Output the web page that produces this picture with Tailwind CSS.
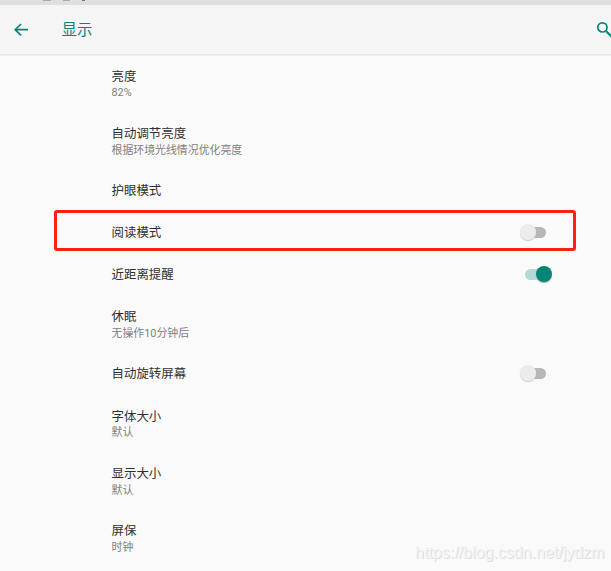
<!DOCTYPE html>
<html lang="zh-CN">
<head>
<meta charset="utf-8">
<title>显示</title>
<script src="https://cdn.jsdelivr.net/npm/@tailwindcss/browser@4"></script>
</head>
<body class="relative flex h-[571px] w-[611px] flex-col overflow-hidden bg-[#fafafa] font-[Roboto,'Noto_Sans_CJK_SC',sans-serif] text-[#303030]">
<div class="h-[5px] shrink-0 overflow-hidden bg-[#dfdfdf]">
  <svg class="block" width="611" height="5"><path d="M43 0h8M63 0h7" stroke="#aaa" stroke-width="2"/><path d="M82 0h3" stroke="#777" stroke-width="2"/></svg>
</div>
<header class="flex h-[50px] shrink-0 items-center border-b border-[#e8e8e8] bg-[#f5f5f5] text-[#068575] shadow-[0_1px_1px_#eeeeee]">
  <svg class="ml-[14px] shrink-0" width="14" height="14" viewBox="0 0 14 14" fill="none" stroke="currentColor" stroke-width="1.7"><path d="M14 6.7H1.5M7 1L1.2 6.7L7 12.4"/></svg>
  <h1 class="ml-[33.5px] text-[15.4px] leading-5">显示</h1>
  <svg class="ml-auto -mr-[3px] shrink-0" width="17" height="17" viewBox="0 0 17 17" fill="none" stroke="currentColor" stroke-width="1.7"><circle cx="5.4" cy="6.4" r="4.6"/><path d="M8.7 9.7l6 6" stroke-width="2.1"/></svg>
</header>
<main class="flex flex-col text-[12.45px] leading-4 [&_p]:text-[10.9px] [&_p]:leading-[17px] [&_p]:text-[#808080]">
  <section class="h-[57.3px] pl-[111.5px] pt-[13.6px]"><h2>亮度</h2><p class="-mt-px">82%</p></section>
  <section class="h-[57.3px] pl-[111.5px] pt-[13.6px]"><h2>自动调节亮度</h2><p>根据环境光线情况优化亮度</p></section>
  <section class="flex h-[42px] items-center pl-[111.5px]"><h2>护眼模式</h2></section>
  <section class="relative flex h-[42px] items-center pl-[111.5px] pr-[65px]">
    <div class="absolute left-[54px] top-[-2px] h-[41.5px] w-[522px] rounded-[3px] border-3 border-[#fc2013]"></div>
    <h2>阅读模式</h2>
    <div class="mb-px ml-auto flex h-[11px] w-[25px] items-center rounded-full bg-[#b7b7b7]"><span class="-ml-[1.5px] size-[16px] shrink-0 rounded-full bg-[#ececec] shadow-[0_1px_1px_#cccccc]"></span></div>
  </section>
  <section class="flex h-[42px] items-center pl-[111.5px] pr-[60px]">
    <h2>近距离提醒</h2>
    <div class="mb-px ml-auto flex h-[11px] w-[26px] items-center justify-end rounded-full bg-[#b5dad5]"><span class="-mr-[1px] size-[16px] shrink-0 rounded-full bg-[#068575] shadow-[0_1px_1px_#aaaaaa]"></span></div>
  </section>
  <section class="h-[57.3px] pl-[111.5px] pt-[13.6px]"><h2>休眠</h2><p>无操作10分钟后</p></section>
  <section class="flex h-[42px] items-center pl-[111.5px] pr-[65px]">
    <h2>自动旋转屏幕</h2>
    <div class="mb-px ml-auto flex h-[11px] w-[25px] items-center rounded-full bg-[#b7b7b7]"><span class="-ml-[1.5px] size-[16px] shrink-0 rounded-full bg-[#ececec] shadow-[0_1px_1px_#cccccc]"></span></div>
  </section>
  <section class="h-[57.3px] pl-[111.5px] pt-[14px]"><h2>字体大小</h2><p class="-mt-px">默认</p></section>
  <section class="h-[57.3px] pl-[111.5px] pt-[13.6px]"><h2>显示大小</h2><p>默认</p></section>
  <section class="h-[57.3px] pl-[111.5px] pt-[13.6px]"><h2>屏保</h2><p>时钟</p></section>
</main>
<div class="absolute left-[415px] top-[543px] whitespace-nowrap font-['Liberation_Sans',sans-serif] text-[16px] leading-[20px] text-[#f3f3f3] [text-shadow:1px_1px_0_#dedede]">https://blog.csdn.net/jydzm</div>
</body>
</html>
